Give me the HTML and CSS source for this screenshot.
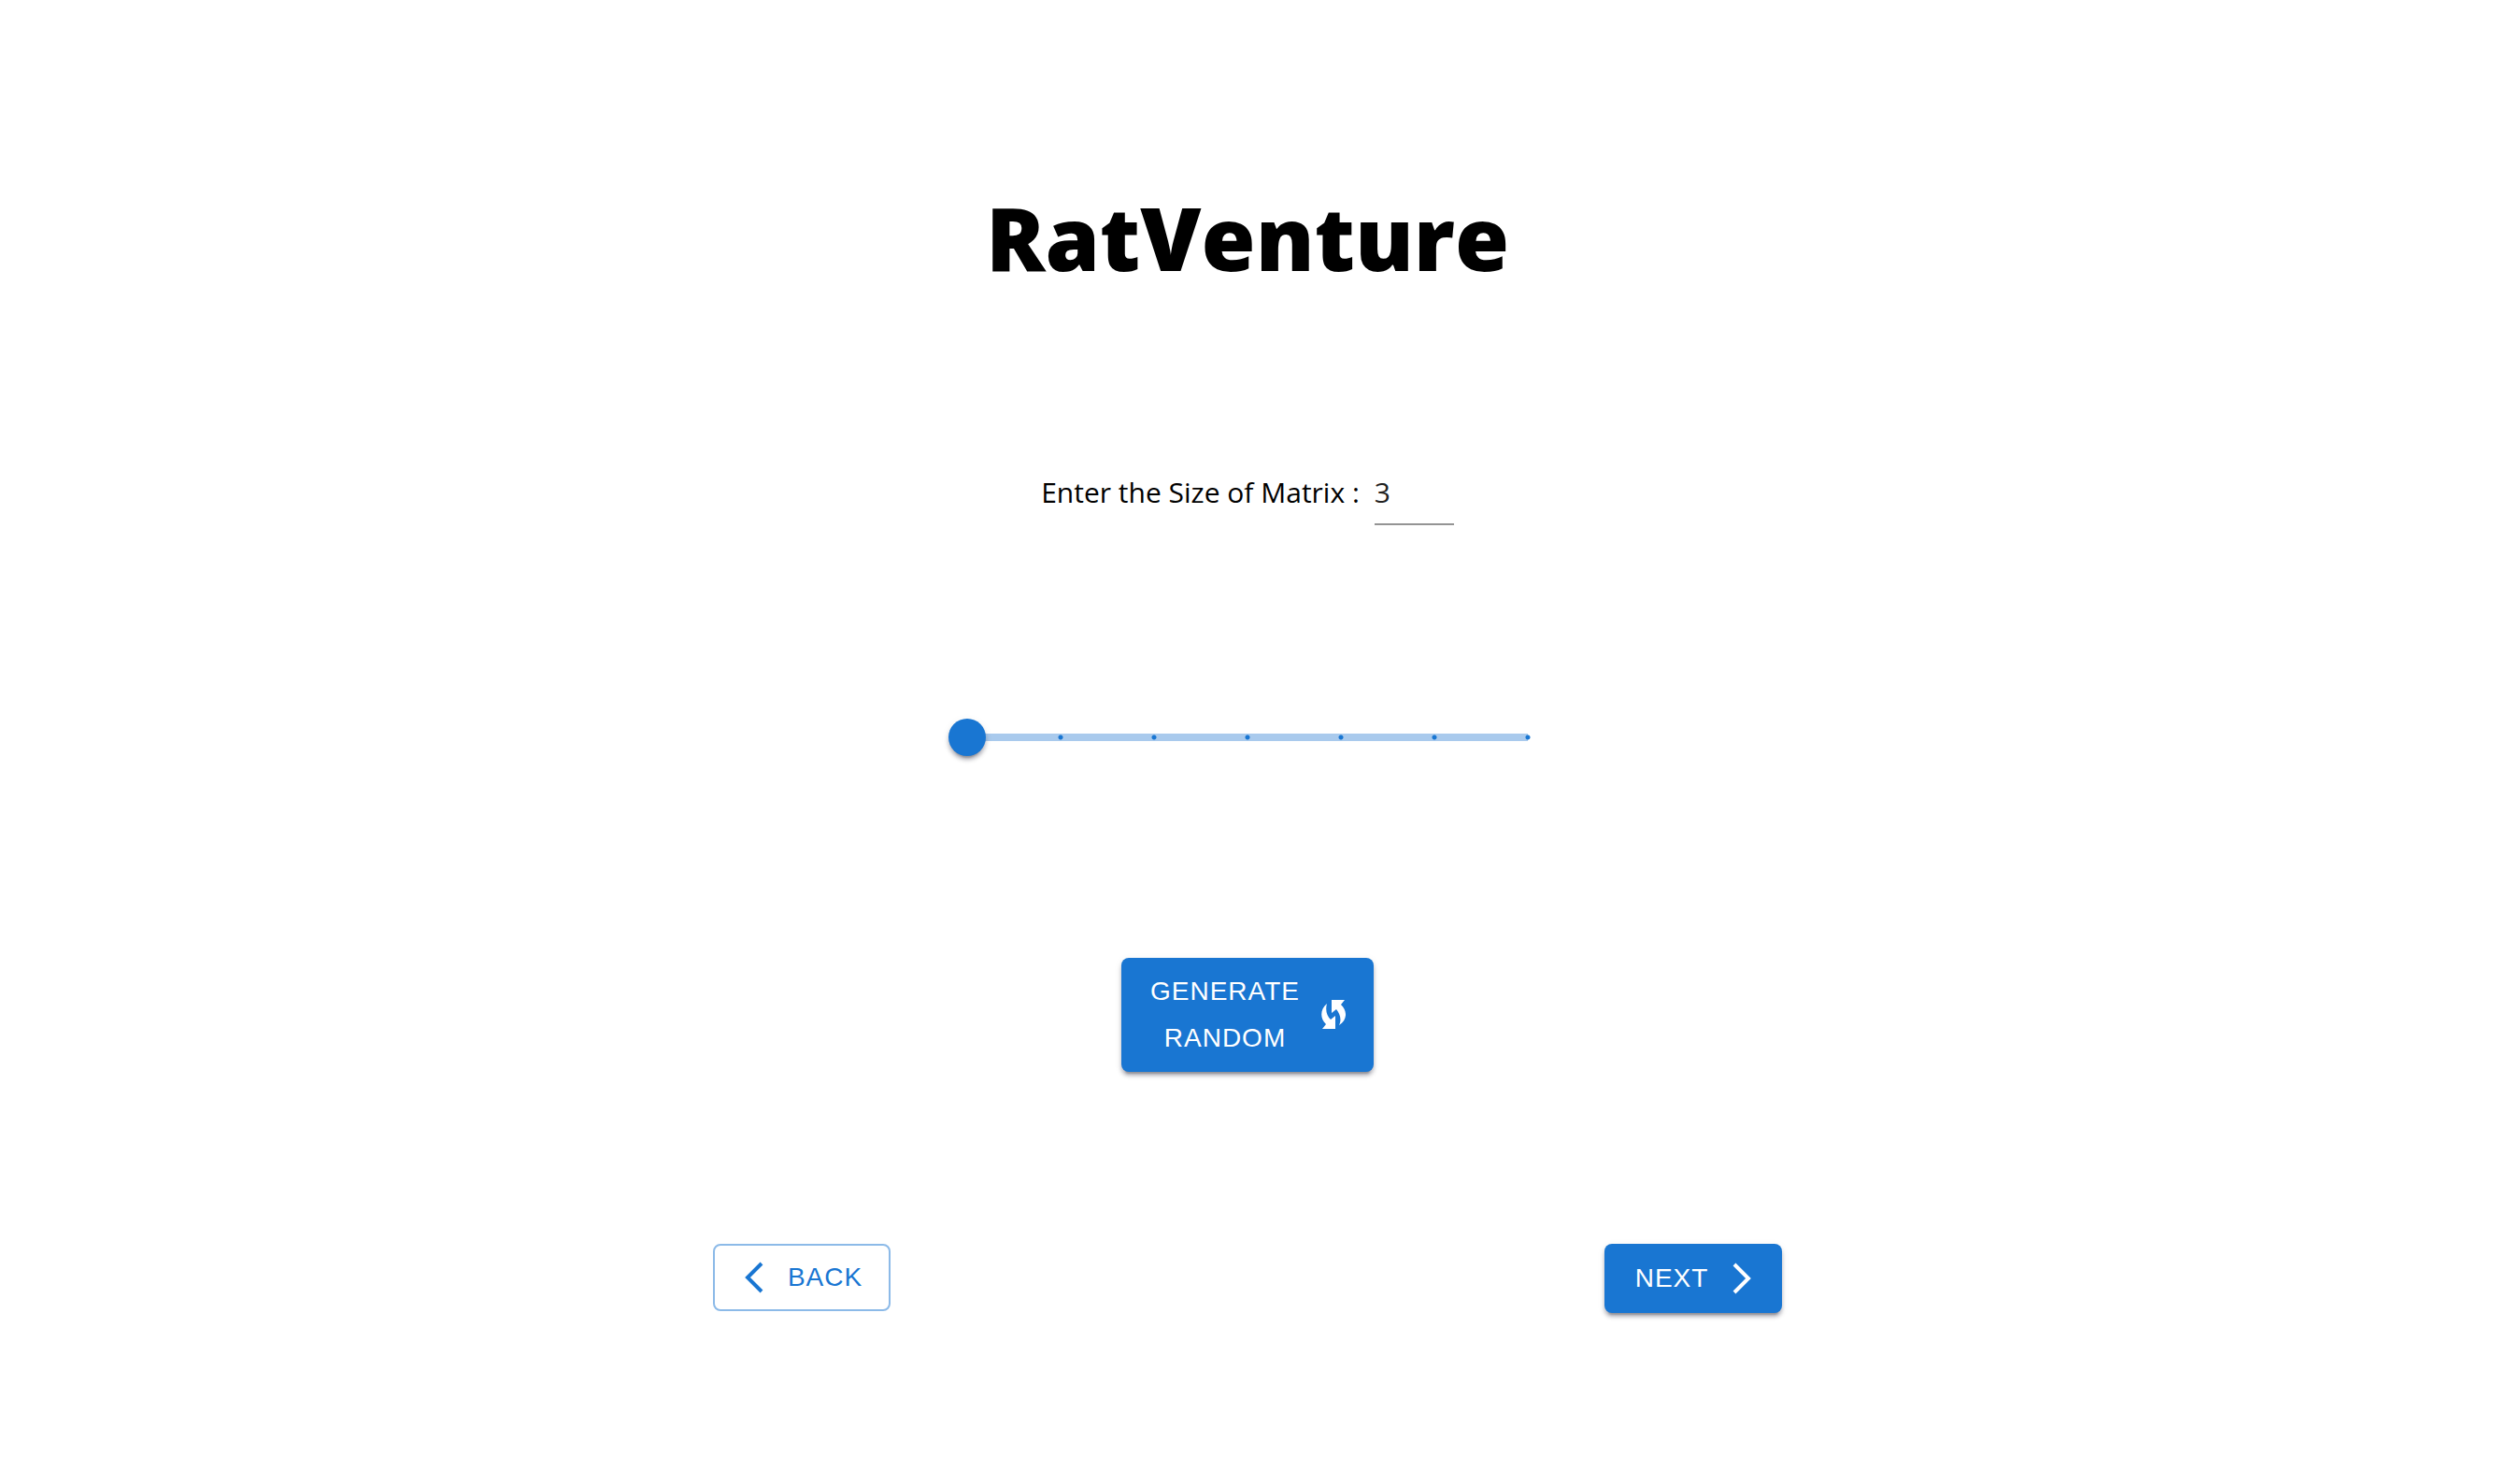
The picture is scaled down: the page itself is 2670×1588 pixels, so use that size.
FILE: index.html
```html
<!DOCTYPE html>
<html lang="en">
<head>
<meta charset="utf-8">
<meta name="viewport" content="width=device-width, initial-scale=1">
<title>RatVenture</title>
<link rel="stylesheet" href="styles.css">
</head>
<body>
<main class="page">
  <h1 class="title">RatVenture</h1>
  <div class="size-field">
    <label for="size">Enter the Size of Matrix :</label>
    <input class="size-input" id="size" type="text" inputmode="numeric" value="3">
  </div>
  <input class="slider" type="range" min="3" max="9" step="1" value="3" aria-label="Size of matrix">
  <button class="button button-filled button-random" type="button">
    <span>Generate Random</span>
    <svg class="icon-swap" viewBox="0 0 26 32" aria-hidden="true">
      <path d="M11 0H25L21 5C28 12 28 21 19 27C22 21 20 15 16 10L11 14Z"/>
      <path d="M15 31H1L5 26C-2 19-1 10 6 4C4 11 6 17 10 21L15 17Z"/>
    </svg>
  </button>
  <nav class="steps">
    <button class="button button-outlined" type="button">
      <svg class="icon-chevron" viewBox="0 0 20 34" aria-hidden="true"><path d="M18 2L3 17L18 32"/></svg>
      <span>Back</span>
    </button>
    <button class="button button-filled" type="button">
      <span>Next</span>
      <svg class="icon-chevron" viewBox="0 0 20 34" aria-hidden="true"><path d="M2 2L17 17L2 32"/></svg>
    </button>
  </nav>
</main>
</body>
</html>
```
FILE: styles.css
```css
* { box-sizing: border-box; }

body {
  margin: 0;
  background: #fff;
  color: #000;
  font-family: "Open Sans", "Noto Sans", sans-serif;
}

.page {
  display: flex;
  flex-direction: column;
  align-items: center;
  max-width: 1176px;
  margin: 0 auto;
  padding: 190px 16px 64px;
}

.title {
  margin: 0 0 186px;
  font-size: 94px;
  font-weight: 800;
  line-height: 128px;
}

.size-field {
  display: flex;
  align-items: flex-start;
  gap: 16px;
  margin-bottom: 207px;
  font-size: 30px;
  line-height: 46px;
}

.size-input {
  width: 85px;
  height: 58px;
  padding: 0 0 12px;
  border: 0;
  border-bottom: 2px solid #949494;
  background: none;
  color: #212121;
  font: inherit;
  outline: 0;
}

.slider {
  width: 100%;
  max-width: 640px;
  height: 40px;
  margin: 0 0 216px;
  appearance: none;
  background:
    radial-gradient(circle, #1976d2 2px, transparent 3px) -30px 0 / 100px 40px repeat-x,
    linear-gradient(#a9caed, #a9caed) center / 600px 8px no-repeat;
}

.slider::-webkit-slider-thumb {
  appearance: none;
  width: 40px;
  height: 40px;
  border: 0;
  border-radius: 50%;
  background: #1976d2;
  box-shadow: 0 6px 2px -4px #0003, 0 4px 4px #0024, 0 2px 10px #0001;
}

.button {
  display: flex;
  align-items: center;
  justify-content: center;
  gap: 26px;
  min-width: 190px;
  padding: 12px 30px;
  border: 0;
  border-radius: 8px;
  font-family: "Liberation Sans", Arial, sans-serif;
  font-size: 28px;
  line-height: 50px;
  letter-spacing: 1px;
  text-transform: uppercase;
}

.button-filled {
  background: #1976d2;
  color: #fff;
  box-shadow: 0 6px 2px -4px #0003, 0 4px 4px #0024, 0 2px 10px #0001;
}

.button-outlined {
  padding: 10px 26px 10px 30px;
  border: 2px solid #8cbae8;
  background: none;
  color: #1976d2;
  line-height: 48px;
}

.button-random {
  width: 270px;
  gap: 22px;
  margin-bottom: 184px;
  padding: 11px 30px;
}

.icon-swap {
  flex: none;
  width: 26px;
  height: 32px;
  fill: currentColor;
}

.icon-chevron {
  flex: none;
  width: 20px;
  height: 34px;
  fill: none;
  stroke: currentColor;
  stroke-width: 4;
}

.steps {
  display: flex;
  justify-content: space-between;
  align-items: flex-start;
  width: 100%;
}
```
